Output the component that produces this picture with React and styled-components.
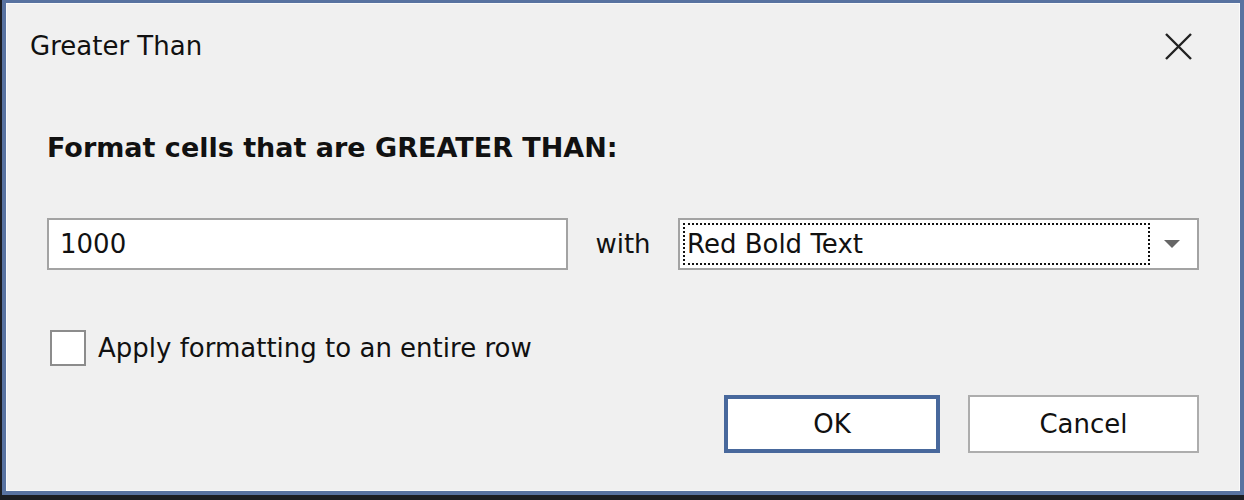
import React from 'react'
import styled, { createGlobalStyle } from 'styled-components'

const GlobalStyle = createGlobalStyle`
  html, body { margin: 0; padding: 0; background: #1b1d22; }
  body { font-family: "DejaVu Sans", "Liberation Sans", sans-serif; }
`

const Screen = styled.div`
  width: 1244px;
  height: 500px;
  box-sizing: border-box;
  padding: 0 0 5px 2px;
  background: #1b1d22;
  display: flex;
`
const Window = styled.div`
  flex: 1;
  display: flex;
  flex-direction: column;
  background: #f0f0f0;
  border: 4px solid #5872a0;
  border-top-width: 3px;
  box-shadow: inset 0 0 0 1px #fafafa;
  color: #111;
`
const Header = styled.div`
  height: 86px;
  display: flex;
  align-items: center;
  justify-content: space-between;
  padding: 0 48px 0 24px;
`
const Title = styled.div`
  font-size: 26px;
`
const CloseButton = styled.div`
  width: 27px;
  height: 27px;
  display: flex;
  svg { display: block; }
`
const Body = styled.div`
  padding: 0 41px;
  display: flex;
  flex-direction: column;
`
const Heading = styled.h3`
  margin: 44px 0 0;
  font-size: 27px;
  line-height: 30px;
  font-weight: bold;
`
const FieldRow = styled.div`
  margin-top: 55px;
  display: grid;
  grid-template-columns: 521px auto 521px;
  justify-content: space-between;
  align-items: center;
  height: 52px;
`
const Field = styled.div`
  height: 52px;
  box-sizing: border-box;
  background: #fff;
  border: 2px solid #a3a3a3;
  display: flex;
  align-items: center;
  font-size: 26px;
  padding: ${p => (p.$combo ? '3px' : '0 11px')};
`
const Word = styled.span`
  font-size: 26px;
`
const FocusText = styled.div`
  flex: 1;
  height: 100%;
  box-sizing: border-box;
  border: 2px dotted #111;
  display: flex;
  align-items: center;
  padding-left: 2px;
  color: #111;
`
const Arrow = styled.div`
  width: 44px;
  display: flex;
  justify-content: center;
  svg { display: block; }
`
const CheckRow = styled.label`
  margin-top: 60px;
  margin-left: 3px;
  display: flex;
  align-items: center;
  gap: 12px;
  font-size: 26px;
`
const CheckBox = styled.span`
  width: 36px;
  height: 36px;
  box-sizing: border-box;
  border: 2px solid #8c8c8c;
  background: #fff;
`
const Buttons = styled.div`
  margin-top: 29px;
  display: flex;
  justify-content: flex-end;
  gap: 28px;
`
const Button = styled.button`
  width: ${p => p.$w}px;
  height: 58px;
  box-sizing: border-box;
  background: #fff;
  font-family: inherit;
  font-size: 26px;
  color: #111;
  border: ${p => (p.$primary ? '4px solid #48689c' : '2px solid #adadad')};
  padding: 0;
`

export default function App() {
  return (
    <>
      <GlobalStyle />
      <Screen>
        <Window>
          <Header>
            <Title>Greater Than</Title>
            <CloseButton>
              <svg width="27" height="27" viewBox="0 0 27 27">
                <path d="M1 1 L26 26 M26 1 L1 26" stroke="#222" strokeWidth="2.4" />
              </svg>
            </CloseButton>
          </Header>
          <Body>
            <Heading>Format cells that are GREATER THAN:</Heading>
            <FieldRow>
              <Field>1000</Field>
              <Word>with</Word>
              <Field $combo>
                <FocusText>Red Bold Text</FocusText>
                <Arrow>
                  <svg width="16" height="8" viewBox="0 0 16 8">
                    <path d="M0 0 H16 L8 8 Z" fill="#666" />
                  </svg>
                </Arrow>
              </Field>
            </FieldRow>
            <CheckRow>
              <CheckBox />
              Apply formatting to an entire row
            </CheckRow>
            <Buttons>
              <Button $primary $w={216}>OK</Button>
              <Button $w={231}>Cancel</Button>
            </Buttons>
          </Body>
        </Window>
      </Screen>
    </>
  )
}
